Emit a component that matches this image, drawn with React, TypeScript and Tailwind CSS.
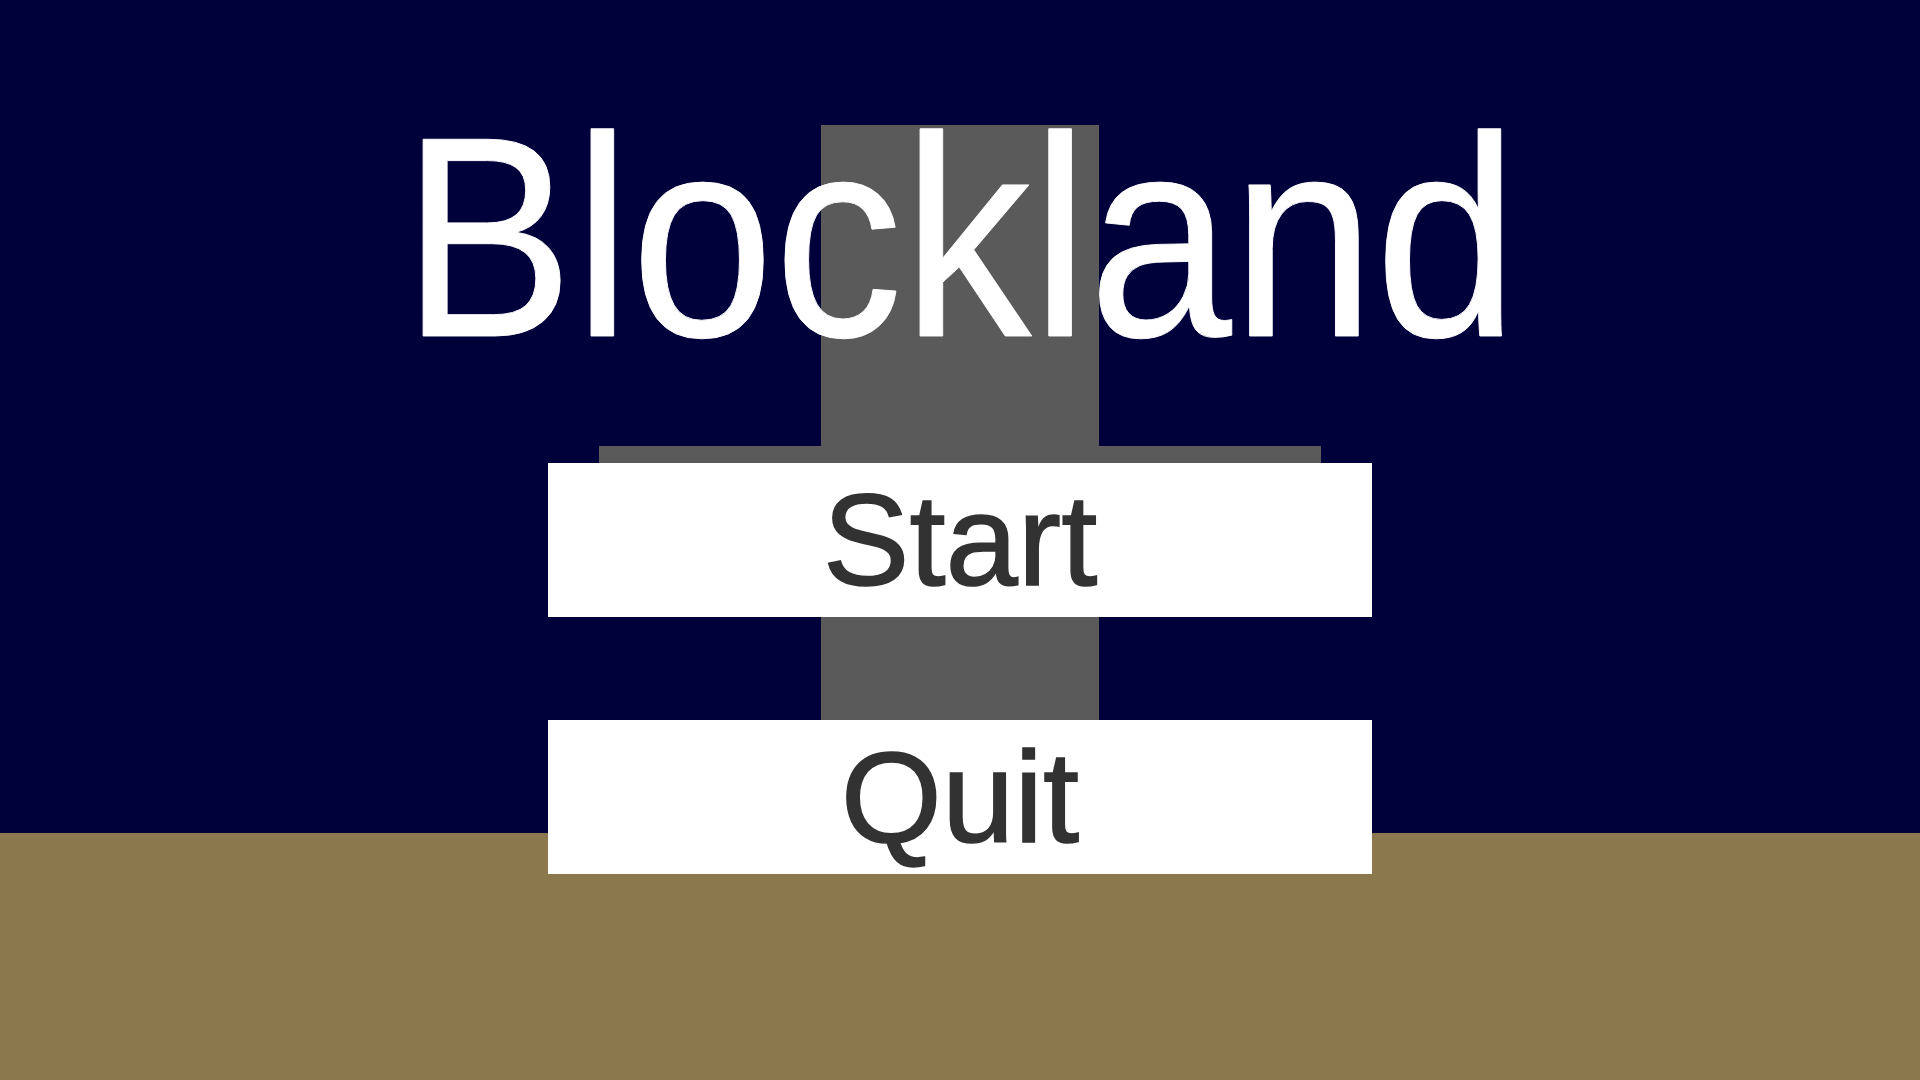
// Blockland main menu: game scene behind, menu overlay on top

function Scene() {
  // the 3D world behind the menu, drawn flat
  return (
    <svg
      className="absolute inset-0 h-full w-full"
      viewBox="0 0 1920 1080"
      preserveAspectRatio="none"
    >
      <rect x="0" y="0" width="1920" height="1080" fill="#00003a" />
      <rect x="0" y="833" width="1920" height="247" fill="#8b784d" />
      <rect x="821" y="125" width="278" height="708" fill="#5a5a5a" />
      <rect x="599" y="446" width="722" height="17" fill="#5a5a5a" />
    </svg>
  )
}

function MenuButton({ label }: { label: string }) {
  return (
    <button className="flex h-[154px] w-[824px] items-center justify-center bg-white text-[130px] leading-none text-[#323232] [-webkit-text-stroke:1.5px_#323232]">
      {label}
    </button>
  )
}

export default function App() {
  return (
    <div className="relative h-screen w-full overflow-hidden font-['Liberation_Sans',Arial,sans-serif]">
      <Scene />

      <div className="absolute inset-0 flex flex-col items-center pt-[94px]">
        <h1 className="scale-x-[0.9] text-[286px] leading-none font-normal text-white [-webkit-text-stroke:1px_#ffffff]">
          Blockland
        </h1>

        <div className="mt-[83px] flex flex-col items-center gap-[103px]">
          <MenuButton label="Start" />
          <MenuButton label="Quit" />
        </div>
      </div>
    </div>
  )
}
